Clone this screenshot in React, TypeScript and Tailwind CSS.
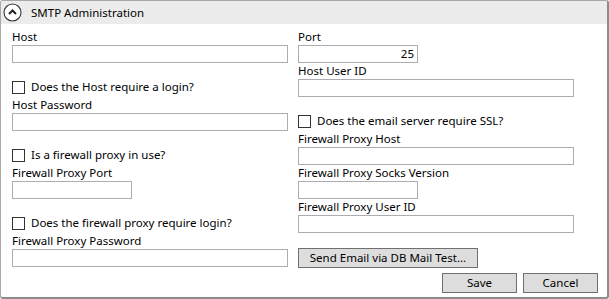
import React from "react";

const font = { fontFamily: '"Noto Sans", "Segoe UI", sans-serif' };

function Label({ children }: { children: React.ReactNode }) {
  return <div className="h-[16px] leading-[16px] text-[11.5px] text-black whitespace-nowrap">{children}</div>;
}

function Input({ w, value }: { w: string; value?: string }) {
  return (
    <div className={`${w} h-[18px] border border-[#abadb3] bg-white text-right text-[11.5px] leading-[16px] pr-[3px] text-black`}>
      {value}
    </div>
  );
}

function Field({ label, w, value }: { label: string; w: string; value?: string }) {
  return (
    <div className="h-[34px] flex flex-col">
      <Label>{label}</Label>
      <Input w={w} value={value} />
    </div>
  );
}

function Check({ label }: { label: string }) {
  return (
    <div className="h-[34px] flex items-end pb-[3px]">
      <div className="flex items-center gap-[6px] h-[14px]">
        <div className="w-[13px] h-[13px] border border-[#333333] bg-white" />
        <span className="text-[11.5px] leading-[14px] text-black whitespace-nowrap">{label}</span>
      </div>
    </div>
  );
}

function Btn({ w, children }: { w: string; children: React.ReactNode }) {
  return (
    <div className={`${w} h-[20px] border border-[#707070] bg-[#dddddd] flex items-center justify-center text-[11.5px] text-black`}>
      {children}
    </div>
  );
}

export default function App() {
  return (
    <div className="w-[609px] h-[299px] bg-white" style={font}>
      <div className="w-[609px] h-[299px] border-l border-t border-[#a8a8a8] border-r-2 border-b-2 border-r-[#8c8c8c] border-b-[#8c8c8c] rounded-[3px] flex flex-col overflow-hidden">
        <div className="h-[23px] bg-[#ececec] flex items-center pl-[2px] gap-[9px] shrink-0">
          <svg width="19" height="19" viewBox="0 0 19 19">
            <circle cx="9.5" cy="9.5" r="8.5" fill="white" stroke="#333" strokeWidth="1.1" />
            <path d="M6 11 L9.5 7.5 L13 11" fill="none" stroke="#222" strokeWidth="2" />
          </svg>
          <span className="text-[11.5px] text-black leading-[16px]">SMTP Administration</span>
        </div>
        <div className="flex pl-[11px] pt-[5px] gap-[10px]">
          <div className="w-[276px] flex flex-col">
            <Field label="Host" w="w-[276px]" />
            <Check label="Does the Host require a login?" />
            <Field label="Host Password" w="w-[276px]" />
            <Check label="Is a firewall proxy in use?" />
            <Field label="Firewall Proxy Port" w="w-[120px]" />
            <Check label="Does the firewall proxy require login?" />
            <Field label="Firewall Proxy Password" w="w-[276px]" />
          </div>
          <div className="w-[276px] flex flex-col">
            <Field label="Port" w="w-[120px]" value="25" />
            <Field label="Host User ID" w="w-[276px]" />
            <Check label="Does the email server require SSL?" />
            <Field label="Firewall Proxy Host" w="w-[276px]" />
            <Field label="Firewall Proxy Socks Version" w="w-[120px]" />
            <Field label="Firewall Proxy User ID" w="w-[276px]" />
            <div className="mt-[15px]">
              <Btn w="w-[180px]">Send Email via DB Mail Test...</Btn>
            </div>
          </div>
        </div>
        <div className="flex justify-end gap-[6px] pr-[9px] mt-[5px]">
          <Btn w="w-[75px]">Save</Btn>
          <Btn w="w-[75px]">Cancel</Btn>
        </div>
      </div>
    </div>
  );
}
